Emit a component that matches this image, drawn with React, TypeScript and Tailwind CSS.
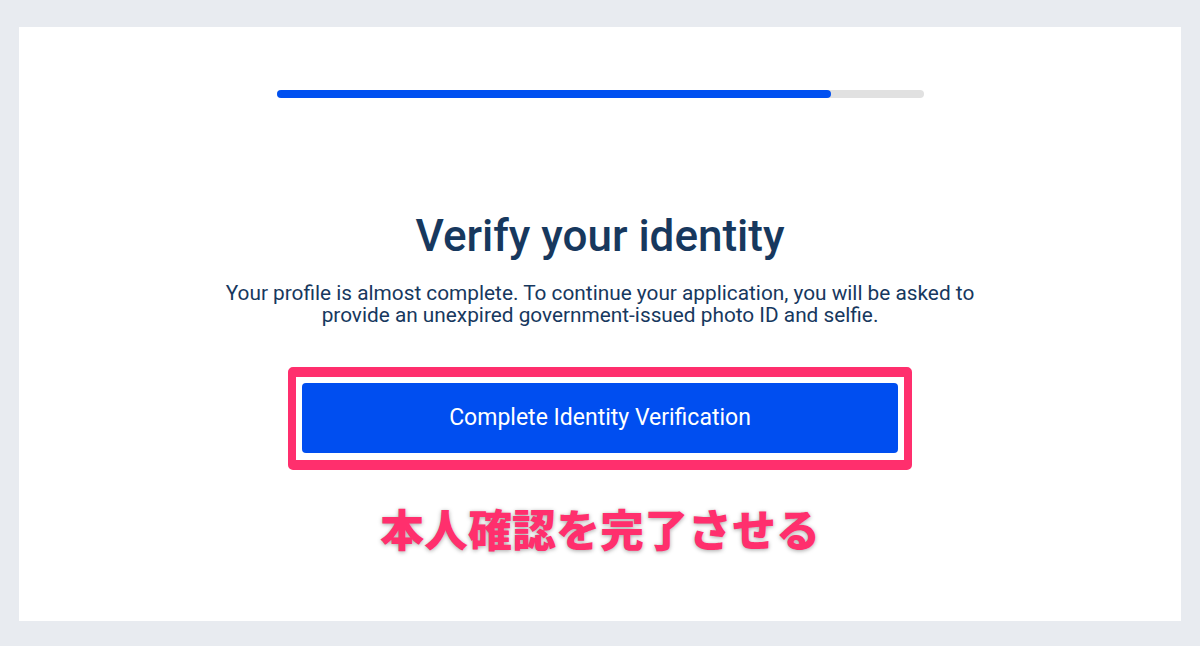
export default function App() {
  return (
    <div className="h-[646px] w-[1200px] bg-[#e8ebf0] pt-[27px] pb-[25px] px-[19px] font-['Roboto',sans-serif]">
      <div className="flex h-full flex-col items-center bg-white pt-[63px]">
        <div className="h-[8px] w-[647px] rounded-full bg-[#e1e1e1]">
          <div className="h-full w-[554px] rounded-full bg-[#0050f0]" />
        </div>
        <h1 className="mt-[112px] text-[44px] leading-[52px] font-medium text-[#17385e]">Verify your identity</h1>
        <p className="mt-[20px] w-[770px] text-center text-[20.8px] leading-[22px] text-[#17385e]">
          Your profile is almost complete. To continue your application, you will be asked to provide an unexpired government-issued photo ID and selfie.
        </p>
        <div className="mt-[41px] rounded-[5px] border-x-[8px] border-y-[10px] border-[#ff2f6d] px-[6px] pt-[6px] pb-[7px]">
          <button className="flex h-[70px] w-[596px] items-center justify-center rounded-[4px] bg-[#004ef0] text-[23px] text-white">
            Complete Identity Verification
          </button>
        </div>
        <div className="mt-[30px] text-[44px] leading-[56px] font-black text-[#ff2f6d] font-['Noto_Sans_CJK_JP',sans-serif] [-webkit-text-stroke:7px_white] [paint-order:stroke_fill] [text-shadow:0_1px_4px_rgba(0,0,0,0.35)]">
          本人確認を完了させる
        </div>
      </div>
    </div>
  );
}
